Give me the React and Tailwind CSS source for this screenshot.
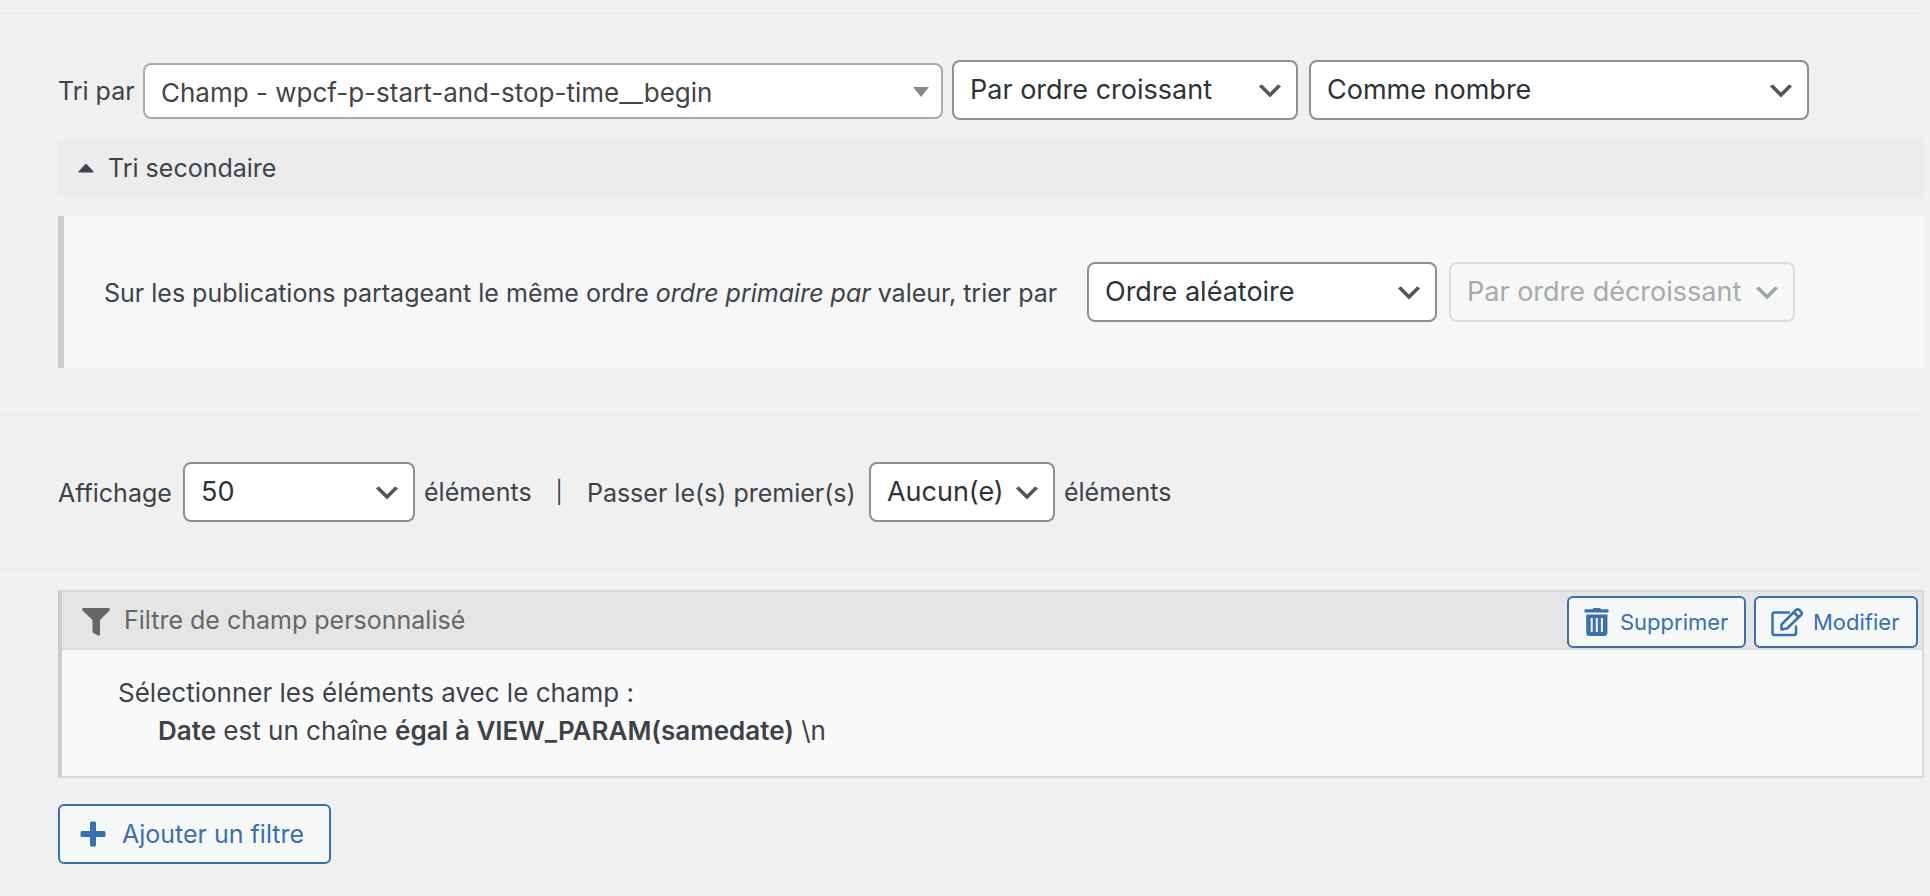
import clsx from "clsx";

function Select({ id, label, value, className, disabled }) {
  return (
    <div className={clsx("relative h-[60px]", className)}>
      <select
        id={id}
        aria-label={label}
        disabled={disabled}
        className="h-full w-full appearance-none rounded-lg border-2 border-[#8c8f94] bg-white pr-10 pl-4 text-[27px] text-[#2c3338] disabled:border-[#dcdcde] disabled:bg-[#f6f7f7] disabled:text-[#a7aaad] disabled:opacity-100"
      >
        <option>{value}</option>
      </select>
      <svg
        viewBox="0 0 20 20"
        className={clsx(
          "pointer-events-none absolute top-[15px] right-3 size-8",
          disabled ? "fill-[#a0a5aa]" : "fill-[#555]"
        )}
      >
        <path d="M5 6l5 5 5-5 2 1-7 7-7-7 2-1z" />
      </svg>
    </div>
  );
}

function FilterIcon() {
  return (
    <svg viewBox="0 0 28 28" className="mt-1 mr-[14px] size-7 shrink-0" fill="currentColor">
      <path d="M1 0h26q1.500 1 .5 2.500L18 12v14.500q-.5 1.500-2 1L11.500 25q-1-.5-1-1.500V12L.5 2.500Q-.5 1 1 0z" />
    </svg>
  );
}

function TrashIcon() {
  return (
    <svg viewBox="0 0 26 30" className="h-[30px] w-[26px] shrink-0" fill="currentColor">
      <path d="M8.500 2.200Q9 1 10.500 1h4.500Q16.500 1 17 2.200H24.500v3.300H.5V2.200z" />
      <path
        fillRule="evenodd"
        d="M2.200 7.500h21.200V26a3 3 0 0 1-3 3H5.200a3 3 0 0 1-3-3zM6.700 11v14h2V11zM11.800 11v14h2V11zM16.900 11v14h2V11z"
      />
    </svg>
  );
}

function EditIcon() {
  return (
    <svg
      viewBox="0 0 32 30"
      className="h-[30px] w-8 shrink-0"
      fill="none"
      stroke="currentColor"
      strokeWidth="2.5"
      strokeLinejoin="round"
    >
      <path d="M19 5.500H3.500a2 2 0 0 0-2 2V26a2 2 0 0 0 2 2H23a2 2 0 0 0 2-2V18.500" />
      <path d="M10.500 22.500V17.500L25 3q1.700-1.700 3.400 0L30 4.600q1.700 1.700 0 3.400L16 21.500l-5.500 1z" />
      <path d="M23 5.500l4.500 4.500" />
    </svg>
  );
}

function PlusIcon() {
  return (
    <svg viewBox="0 0 26 26" className="size-[26px]" fill="currentColor">
      <rect x="10" y="0.500" width="6" height="25" rx="1.500" />
      <rect x="0.500" y="10" width="25" height="6" rx="1.500" />
    </svg>
  );
}

const actions = [
  { icon: TrashIcon, label: "Supprimer", width: "w-[179px]" },
  { icon: EditIcon, label: "Modifier", width: "w-[164px]" },
];

export default function App() {
  return (
    <main className="min-h-screen bg-[#f0f0f0] pt-3 pr-[6px] font-['Inter',sans-serif] text-[25px] leading-9 text-[#3c434a]">
      <section className="border-t-2 border-[#ececec] pt-[46px] pb-[46px] pl-[58px]">
        <div className="flex flex-wrap items-center">
          <label htmlFor="orderby" className="w-[85px] pt-0.5">
            Tri par
          </label>
          <div className="relative mt-0.5 mr-[9px] h-14 w-[800px]">
            <select
              id="orderby"
              className="h-full w-full appearance-none rounded-lg border-2 border-[#aaa] bg-white px-4 pt-1 text-[26px] text-[#444]"
            >
              <option>Champ - wpcf-p-start-and-stop-time__begin</option>
            </select>
            <svg
              viewBox="0 0 16 10"
              className="pointer-events-none absolute top-6 right-[14px] h-[10px] w-4 fill-[#888]"
            >
              <path d="M0 0h16L8 10z" />
            </svg>
          </div>
          <Select id="order" label="Ordre" value="Par ordre croissant" className="mr-[11px] w-[346px]" />
          <Select id="order-as" label="Trier comme" value="Comme nombre" className="w-[500px]" />
        </div>

        <button
          type="button"
          aria-expanded="true"
          className="mt-5 flex h-14 w-full items-center bg-[#ececec] pl-5"
        >
          <svg viewBox="0 0 16 10" className="mr-[14px] h-[10px] w-4 fill-current">
            <path d="M8 0.500L15.500 8.500q.5 1-.5 1H1q-1 0-.5-1z" />
          </svg>
          Tri secondaire
        </button>

        <div className="mt-5 flex min-h-[152px] flex-wrap items-center border-l-6 border-[#ccc] bg-[#f6f6f6] pl-10">
          <label htmlFor="orderby-second" className="w-[983px] pt-0.5">
            Sur les publications partageant le même ordre <em>ordre primaire par</em> valeur, trier par
          </label>
          <Select id="orderby-second" value="Ordre aléatoire" className="mr-3 w-[350px]" />
          <Select label="Ordre secondaire" value="Par ordre décroissant" className="w-[346px]" disabled />
        </div>
      </section>

      <section className="flex flex-wrap items-center border-t-2 border-[#ececec] py-[46px] pl-[58px]">
        <label htmlFor="limit" className="w-[125px] pt-0.5">
          Affichage
        </label>
        <Select id="limit" value="50" className="w-[232px]" />
        <span className="ml-[9px]">éléments</span>
        <span className="mx-6 text-[22px]">|</span>
        <label htmlFor="offset" className="w-[282px] pt-0.5">
          Passer le(s) premier(s)
        </label>
        <Select id="offset" value="Aucun(e)" className="w-[186px]" />
        <span className="ml-[9px]">éléments</span>
      </section>

      <section className="border-t-2 border-[#ececec] pt-5 pb-8 pl-[58px]">
        <div className="border-2 border-l-4 border-[#d9d9d9] border-l-[#ccc] bg-[#f9f9f9]">
          <header className="flex h-[58px] items-center border-b-2 border-[#d9d9d9] bg-[#e5e5e5] pr-1 pl-5 text-[#666]">
            <FilterIcon />
            <h2>Filtre de champ personnalisé</h2>
            <div className="mt-1 ml-auto flex gap-2">
              {actions.map(({ icon: Icon, label, width }) => (
                <button
                  key={label}
                  type="button"
                  className={clsx(
                    "flex h-[52px] items-center gap-[10px] rounded-md border-2 border-[#3a6fb0] bg-[#f6f7f7] pl-[15px] text-[22px] text-[#3a6fb0]",
                    width
                  )}
                >
                  <Icon />
                  {label}
                </button>
              ))}
            </div>
          </header>
          <div className="px-14 pt-6 pb-[26px] text-[26px] leading-[38px]">
            <p>Sélectionner les éléments avec le champ :</p>
            <p className="pl-10">
              <strong className="font-semibold">Date</strong> est un chaîne{" "}
              <strong className="font-semibold">égal à VIEW_PARAM(samedate)</strong> \n
            </p>
          </div>
        </div>

        <button
          type="button"
          className="mt-[26px] flex h-[60px] w-[273px] items-center gap-4 rounded-md border-2 border-[#3a6fb0] bg-[#f6f7f7] pl-5 text-[#3a6fb0]"
        >
          <PlusIcon />
          Ajouter un filtre
        </button>
      </section>
    </main>
  );
}
